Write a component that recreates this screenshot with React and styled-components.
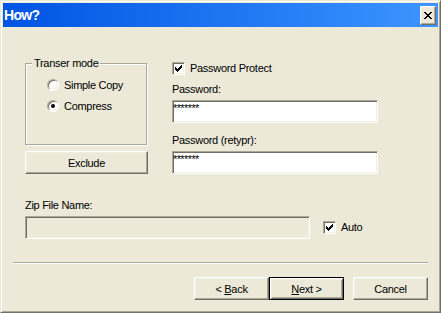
import React from "react";
import styled, { createGlobalStyle } from "styled-components";

const GlobalStyle = createGlobalStyle`
  html, body {
    margin: 0;
    padding: 0;
    background: #ece9d8;
  }
  body {
    font-family: "Liberation Sans", Arial, sans-serif;
    font-size: 11px;
    letter-spacing: -0.3px;
    color: #000;
  }
`;

const Window = styled.div`
  width: 441px;
  height: 313px;
  box-sizing: border-box;
  border: 1px solid;
  border-color: #ece9d8 #716f64 #716f64 #ece9d8;
  box-shadow: inset 1px 1px 0 #fff, inset -1px -1px 0 #aca899;
  padding: 2px;
  background: #ece9d8;
  display: flex;
  flex-direction: column;
`;

const TitleBar = styled.div`
  height: 24px;
  display: flex;
  align-items: center;
  justify-content: space-between;
  padding: 0 2px 0 1px;
  background: linear-gradient(to right, #0054e3, #3d95ff);
`;

const Title = styled.span`
  color: #fff;
  font-weight: bold;
  font-size: 14px;
  letter-spacing: -0.7px;
`;

const CloseButton = styled.div`
  width: 16px;
  height: 19px;
  box-sizing: border-box;
  display: flex;
  align-items: center;
  justify-content: center;
  background: #ece9d8;
  border: 1px solid;
  border-color: #fff #716f64 #716f64 #fff;
  box-shadow: inset -1px -1px 0 #aca899, inset 1px 1px 0 #f1efe2;
`;

const Body = styled.div`
  flex: 1;
  display: flex;
  flex-direction: column;
  padding: 0 10px;
`;

const Main = styled.div`
  padding: 30px 0 0 12px;
  display: flex;
  flex-direction: column;
`;

const TopRow = styled.div`
  display: flex;
  align-items: flex-start;
  gap: 24px;
`;

const LeftColumn = styled.div`
  width: 123px;
  display: flex;
  flex-direction: column;
`;

const GroupBox = styled.fieldset`
  margin: 0;
  padding: 0;
  width: 122px;
  height: 88px;
  box-sizing: border-box;
  min-inline-size: 0;
  border: 1px solid #aca899;
  box-shadow: inset 1px 1px 0 #fff, 1px 1px 0 #fff;
`;

const Legend = styled.legend`
  margin-left: 6px;
  padding: 0 2px;
  line-height: 13px;
  background: #ece9d8;
`;

const RadioList = styled.div`
  display: flex;
  flex-direction: column;
  gap: 5px;
  padding: 7px 0 0 21px;
`;

const OptionRow = styled.label`
  display: flex;
  align-items: center;
  gap: 5px;
  height: ${(p) => p.$height || 16}px;
  line-height: 13px;
  white-space: nowrap;
`;

const Radio = styled.span`
  width: 12px;
  height: 12px;
  box-sizing: border-box;
  border-radius: 50%;
  border: 1px solid;
  border-color: #aca899 #fff #fff #aca899;
  box-shadow: inset 1px 1px 0 #716f64, inset -1px -1px 0 #f1efe2;
  background: #fff;
  display: flex;
  align-items: center;
  justify-content: center;
  flex-shrink: 0;

  &::after {
    content: "";
    width: 4px;
    height: 4px;
    border-radius: 50%;
    background: ${(p) => (p.$checked ? "#000" : "transparent")};
  }
`;

const CheckBox = styled.span`
  width: 13px;
  height: 13px;
  box-sizing: border-box;
  border: 1px solid;
  border-color: #aca899 #fff #fff #aca899;
  box-shadow: inset 1px 1px 0 #716f64, inset -1px -1px 0 #f1efe2;
  background: #fff;
  display: flex;
  align-items: center;
  justify-content: center;
  flex-shrink: 0;
`;

const Button = styled.div`
  width: ${(p) => p.$width || 75}px;
  height: 23px;
  box-sizing: border-box;
  display: flex;
  align-items: center;
  justify-content: center;
  background: #ece9d8;
  border: 1px solid;
  border-color: ${(p) => (p.$default ? "#000" : "#fff #716f64 #716f64 #fff")};
  box-shadow: ${(p) =>
    p.$default
      ? "inset 1px 1px 0 #fff, inset -1px -1px 0 #716f64, inset 2px 2px 0 #f1efe2, inset -2px -2px 0 #aca899"
      : "inset -1px -1px 0 #aca899, inset 1px 1px 0 #f1efe2"};
  margin-left: ${(p) => p.$gap || 0}px;
  margin-top: ${(p) => p.$top || 0}px;

  u {
    text-decoration-thickness: 1px;
    text-underline-offset: 1px;
  }
`;

const RightColumn = styled.div`
  width: 206px;
  padding-top: 5px;
  display: flex;
  flex-direction: column;
`;

const FieldLabel = styled.div`
  line-height: 13px;
  margin-top: ${(p) => p.$top || 0}px;
`;

const TextBox = styled.div`
  width: ${(p) => p.$width || 206}px;
  height: 23px;
  box-sizing: border-box;
  margin-top: ${(p) => p.$top || 0}px;
  padding: 1px 0 0 0;
  line-height: 13px;
  border: 1px solid;
  border-color: #aca899 #fff #fff #aca899;
  box-shadow: inset 1px 1px 0 #716f64, inset -1px -1px 0 #f1efe2;
  background: ${(p) => (p.$disabled ? "#ece9d8" : "#fff")};
  letter-spacing: -0.6px;
  flex-shrink: 0;
`;

const ZipRow = styled.div`
  display: flex;
  align-items: center;
  gap: 13px;
  margin-top: 4px;
`;

const Separator = styled.div`
  margin-top: 23px;
  border-top: 1px solid #aca899;
  border-bottom: 1px solid #fff;
`;

const ButtonRow = styled.div`
  display: flex;
  justify-content: flex-end;
  margin-top: 13px;
`;

const CloseGlyph = () => (
  <svg width="8" height="7" viewBox="0 0 8 7" shapeRendering="crispEdges">
    <path
      fill="#000"
      d="M0 0h2v1H0zM6 0h2v1H6zM1 1h2v1H1zM5 1h2v1H5zM2 2h4v1H2zM3 3h2v1H3zM2 4h4v1H2zM1 5h2v1H1zM5 5h2v1H5zM0 6h2v1H0zM6 6h2v1H6z"
    />
  </svg>
);

const CheckGlyph = () => (
  <svg width="7" height="7" viewBox="0 0 7 7" shapeRendering="crispEdges">
    <path
      fill="#000"
      d="M6 0h1v1H6zM5 1h2v1H5zM0 2h1v1H0zM4 2h3v1H4zM0 3h2v1H0zM3 3h3v1H3zM0 4h5v1H0zM1 5h3v1H1zM2 6h1v1H2z"
    />
  </svg>
);

const App = () => (
  <>
    <GlobalStyle />
    <Window>
      <TitleBar>
        <Title>How?</Title>
        <CloseButton>
          <CloseGlyph />
        </CloseButton>
      </TitleBar>
      <Body>
        <Main>
          <TopRow>
            <LeftColumn>
              <GroupBox>
                <Legend>Transer mode</Legend>
                <RadioList>
                  <OptionRow>
                    <Radio />
                    Simple Copy
                  </OptionRow>
                  <OptionRow>
                    <Radio $checked />
                    Compress
                  </OptionRow>
                </RadioList>
              </GroupBox>
              <Button $width={123} $top={6}>
                Exclude
              </Button>
            </LeftColumn>
            <RightColumn>
              <OptionRow $height={13}>
                <CheckBox>
                  <CheckGlyph />
                </CheckBox>
                Password Protect
              </OptionRow>
              <FieldLabel $top={8}>Password:</FieldLabel>
              <TextBox $top={4}>*******</TextBox>
              <FieldLabel $top={11}>Password (retypr):</FieldLabel>
              <TextBox $top={4}>*******</TextBox>
            </RightColumn>
          </TopRow>
          <FieldLabel $top={25}>Zip File Name:</FieldLabel>
          <ZipRow>
            <TextBox $width={285} $disabled />
            <OptionRow $height={13}>
              <CheckBox>
                <CheckGlyph />
              </CheckBox>
              Auto
            </OptionRow>
          </ZipRow>
        </Main>
        <Separator />
        <ButtonRow>
          <Button>
            &lt;&nbsp;<u>B</u>ack
          </Button>
          <Button $default>
            <u>N</u>ext &gt;
          </Button>
          <Button $gap={9}>Cancel</Button>
        </ButtonRow>
      </Body>
    </Window>
  </>
);

export default App;
